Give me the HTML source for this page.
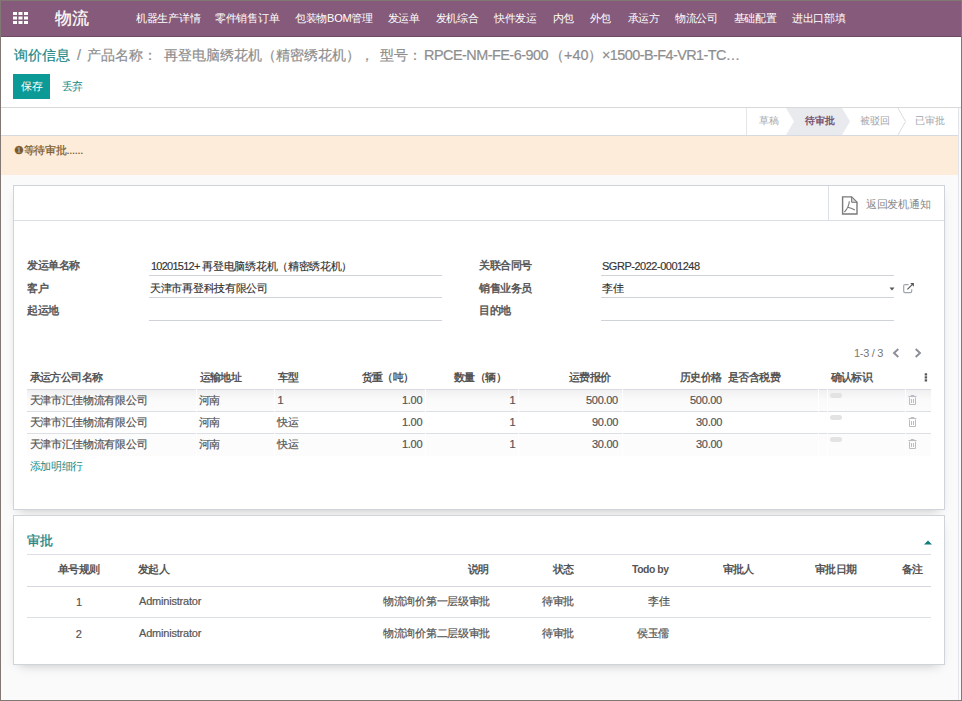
<!DOCTYPE html>
<html><head><meta charset="utf-8">
<style>
*{box-sizing:border-box;margin:0;padding:0}
html,body{width:962px;height:701px;overflow:hidden;background:#827873}
body{font-family:"Liberation Sans",sans-serif;color:#4c4c4c;position:relative}
#app{position:absolute;left:1px;top:1px;width:960px;height:699px;background:#fafafa}
.b{position:absolute}
.a{position:absolute;white-space:nowrap;line-height:1;font-size:11px;letter-spacing:-0.3px}
.m{top:13px;color:#fff}
.lbl{color:#555;letter-spacing:-0.5px;-webkit-text-stroke:0.45px #555}
.val{color:#333;-webkit-text-stroke:0.15px #333}
.ul{position:absolute;height:1px;background:#cfd2d8}
.th{font-weight:bold;color:#555;letter-spacing:-0.6px}
.td{color:#555;-webkit-text-stroke:0.2px #555}
.bc{top:48px;font-size:14.4px;color:#8e8e8e;letter-spacing:0;-webkit-text-stroke:0.2px #8e8e8e}
.st{top:116px;color:#a3a6ac;font-size:10px;letter-spacing:0}
.card{position:absolute;background:#fff;border:1px solid #cfd3da;box-shadow:0 5px 11px -6px rgba(0,0,0,.28)}
.rl{position:absolute;height:1px;background:#dcdfe5}
.gap{position:absolute;width:1px;background:rgba(255,255,255,.85)}
.tr{position:absolute;width:9px;height:10px}
.pill{position:absolute;width:11.5px;height:5px;border-radius:3px;background:#e3e3e3}
</style></head><body>
<div id="app"></div>
<!-- NAV -->
<div class="b" style="left:1px;top:1px;width:960px;height:36px;background:#855a7a;border-bottom:1px solid #6e4a64"></div>
<svg class="b" style="left:13px;top:12px" width="16" height="12" viewBox="0 0 16 12">
 <g fill="#fff">
  <rect x="0" y="0" width="4" height="3"/><rect x="5.5" y="0" width="4" height="3"/><rect x="11" y="0" width="4" height="3"/>
  <rect x="0" y="4.5" width="4" height="3"/><rect x="5.5" y="4.5" width="4" height="3"/><rect x="11" y="4.5" width="4" height="3"/>
  <rect x="0" y="9" width="4" height="3"/><rect x="5.5" y="9" width="4" height="3"/><rect x="11" y="9" width="4" height="3"/>
 </g></svg>
<div class="a" id="brand" style="left:55px;top:10px;font-size:17.3px;color:#fff;letter-spacing:0;-webkit-text-stroke:0.25px #fff">物流</div>
<div class="a m" id="m1" style="left:136px">机器生产详情</div>
<div class="a m" id="m2" style="left:215px">零件销售订单</div>
<div class="a m" id="m3" style="left:295px">包装物BOM管理</div>
<div class="a m" id="m4" style="left:387.5px">发运单</div>
<div class="a m" id="m5" style="left:435.5px">发机综合</div>
<div class="a m" id="m6" style="left:494px">快件发运</div>
<div class="a m" id="m7" style="left:552.5px">内包</div>
<div class="a m" id="m8" style="left:589.5px">外包</div>
<div class="a m" id="m9" style="left:627.5px">承运方</div>
<div class="a m" id="m10" style="left:675px">物流公司</div>
<div class="a m" id="m11" style="left:733.5px">基础配置</div>
<div class="a m" id="m12" style="left:792px">进出口部填</div>

<!-- CONTROL PANEL -->
<div class="b" style="left:1px;top:37px;width:960px;height:71px;background:#fff;border-bottom:1px solid #d9d9d9"></div>
<div class="a bc" id="bc1" style="left:13.5px;color:#1c8886;-webkit-text-stroke:0.2px #1c8886">询价信息</div>
<div class="a bc" id="bc2" style="left:77px">/</div>
<div class="a bc" id="bc3" style="left:87px">产品名称：</div>
<div class="a bc" id="bc4" style="left:164px">再登电脑绣花机（精密绣花机），</div>
<div class="a bc" id="bc5" style="left:380px">型号：</div>
<div class="a bc" id="bc6" style="left:424px;letter-spacing:-0.5px">RPCE-NM-FE-6-900</div>
<div class="a bc" id="bc7" style="left:550px">（+40）</div>
<div class="a bc" id="bc8" style="left:602px;letter-spacing:-0.55px">×1500-B-F4-VR1-TC…</div>
<div class="b" style="left:13px;top:74px;width:37px;height:25px;background:#0b9a96"></div>
<div class="a" id="save" style="left:21px;top:81px;color:#fff">保存</div>
<div class="a" id="disc" style="left:61.5px;top:81px;color:#1a8a87">丢弃</div>

<!-- STATUSBAR -->
<div class="b" style="left:1px;top:108px;width:957px;height:28px;background:#fff;border-bottom:1px solid #d6d9e0"></div>
<div class="b" style="left:746px;top:108px;width:1px;height:27px;background:#e6e6e6"></div>
<div class="a st" id="st1" style="left:759px">草稿</div>
<svg class="b" style="left:786px;top:108px" width="66" height="27" viewBox="0 0 66 27"><polygon points="0,0 56,0 64,13.5 56,27 0,27 8,13.5" fill="#e9eaee"/></svg>
<div class="a st" id="st2" style="left:804.5px;color:#7a5572;font-weight:bold">待审批</div>
<div class="a st" id="st3" style="left:859.5px">被驳回</div>
<svg class="b" style="left:897px;top:108px" width="10" height="27" viewBox="0 0 10 27"><polyline points="1,0 8.5,13.5 1,27" fill="none" stroke="#dcdcdc" stroke-width="1"/></svg>
<div class="a st" id="st4" style="left:915px">已审批</div>

<!-- ALERT -->
<div class="b" style="left:1px;top:136px;width:957px;height:39px;background:#fcecd9"></div>
<div class="a" id="alert" style="left:14px;top:145px;color:#7a5a2c;-webkit-text-stroke:0.2px #7a5a2c">❶等待审批......</div>
<div class="b" style="left:958px;top:108px;width:1px;height:592px;background:#e2e4ea"></div>

<!-- CARD 1 -->
<div class="card" style="left:13px;top:185px;width:932px;height:325px"></div>
<div class="b" style="left:14px;top:220px;width:930px;height:1px;background:#dcdfe5"></div>
<div class="b" style="left:828px;top:186px;width:1px;height:34px;background:#dcdfe5"></div>
<svg class="b" style="left:841px;top:196px" width="17" height="19" viewBox="0 0 17 19">
 <path d="M1.6,0.9 H10.6 L16,6.3 V18 H1.6 Z" fill="none" stroke="#7a7a7a" stroke-width="1.4"/>
 <path d="M10.6,0.9 V6.3 H16 Z" fill="#d8d8d8" stroke="#7a7a7a" stroke-width="1"/>
 <path d="M8.3,5.2 C8.1,9 6.2,13 3.4,16.2 M6.6,11.2 C9,11.6 11.6,12.6 13.9,13.9" fill="none" stroke="#7a7a7a" stroke-width="1.1"/>
</svg>
<div class="a" id="ret" style="left:866px;top:199px;color:#888">返回发机通知</div>

<div class="a lbl" id="l1" style="left:27px;top:260px">发运单名称</div>
<div class="a lbl" id="l2" style="left:27px;top:282.5px">客户</div>
<div class="a lbl" id="l3" style="left:27px;top:304.5px">起运地</div>
<div class="a val" id="v1" style="left:151px;top:261px"><span style="letter-spacing:-0.75px">10201512+</span> 再登电脑绣花机（精密绣花机）</div>
<div class="a val" id="v2" style="left:150px;top:283px">天津市再登科技有限公司</div>
<div class="ul" style="left:149px;top:275px;width:293px"></div>
<div class="ul" style="left:149px;top:297px;width:293px"></div>
<div class="ul" style="left:149px;top:320px;width:293px"></div>

<div class="a lbl" id="r1" style="left:479px;top:260px">关联合同号</div>
<div class="a lbl" id="r2" style="left:479px;top:282.5px">销售业务员</div>
<div class="a lbl" id="r3" style="left:479px;top:304.5px">目的地</div>
<div class="a val" id="v3" style="left:602px;top:261px;letter-spacing:-0.48px">SGRP-2022-0001248</div>
<div class="a val" id="v4" style="left:602px;top:283px">李佳</div>
<div class="ul" style="left:601px;top:275px;width:293px"></div>
<div class="ul" style="left:601px;top:297px;width:293px"></div>
<div class="ul" style="left:601px;top:320px;width:293px"></div>
<svg class="b" style="left:889px;top:287px" width="6" height="4" viewBox="0 0 6 4"><polygon points="0.5,0.5 5.5,0.5 3,3.5" fill="#555"/></svg>
<svg class="b" style="left:903px;top:283px" width="12" height="11" viewBox="0 0 12 11">
 <path d="M5.6,1.6 H2 Q0.7,1.6 0.7,2.9 V8.3 Q0.7,9.6 2,9.6 H7.4 Q8.7,9.6 8.7,8.3 V6.2" fill="none" stroke="#9fa5ad" stroke-width="1.2"/>
 <path d="M4.4,6.3 L9.4,1.3" fill="none" stroke="#555" stroke-width="1.2"/>
 <polygon points="7.2,0 10.9,0 10.9,3.7" fill="#555"/>
</svg>

<!-- pager -->
<div class="a" id="pager" style="left:854px;top:347.5px;color:#777">1-3 / 3</div>
<svg class="b" style="left:892px;top:347.5px" width="8" height="10" viewBox="0 0 8 10"><polyline points="6.3,1 2,5 6.3,9" fill="none" stroke="#8a8f96" stroke-width="1.9"/></svg>
<svg class="b" style="left:914px;top:347.5px" width="8" height="10" viewBox="0 0 8 10"><polyline points="1.7,1 6,5 1.7,9" fill="none" stroke="#8a8f96" stroke-width="1.9"/></svg>

<!-- table -->
<div class="a th" id="h1" style="left:29.5px;top:372px">承运方公司名称</div>
<div class="a th" id="h2" style="left:199.5px;top:372px">运输地址</div>
<div class="a th" id="h3" style="left:278px;top:372px">车型</div>
<div class="a th" id="h4" style="left:361.5px;top:372px">货重（吨）</div>
<div class="a th" id="h5" style="left:454px;top:372px">数量（辆）</div>
<div class="a th" id="h6" style="left:569px;top:372px">运费报价</div>
<div class="a th" id="h7" style="left:680px;top:372px">历史价格</div>
<div class="a th" id="h8" style="left:728px;top:372px">是否含税费</div>
<div class="a th" id="h9" style="left:830.5px;top:372px">确认标识</div>
<svg class="b" style="left:924px;top:373px" width="4" height="9" viewBox="0 0 4 9"><rect x="0.7" y="0.3" width="2.4" height="2.2" fill="#555"/><rect x="0.7" y="3.3" width="2.4" height="2.2" fill="#555"/><rect x="0.7" y="6.3" width="2.4" height="2.2" fill="#555"/></svg>

<div class="b" style="left:27px;top:390px;width:904px;height:21px;background:linear-gradient(#f0f0f2,#fafafa 45%,#fcfcfc)"></div>
<div class="b" style="left:27px;top:434px;width:904px;height:22px;background:#fcfcfc"></div>
<div class="rl" style="left:27px;top:389px;width:904px;background:#d8dbe2"></div>
<div class="rl" style="left:27px;top:411px;width:904px"></div>
<div class="rl" style="left:27px;top:433px;width:904px"></div>
<div class="gap" style="left:196px;top:389px;height:67px"></div>
<div class="gap" style="left:274px;top:389px;height:67px"></div>
<div class="gap" style="left:425px;top:389px;height:67px"></div>
<div class="gap" style="left:518px;top:389px;height:67px"></div>
<div class="gap" style="left:622px;top:389px;height:67px"></div>
<div class="gap" style="left:818px;top:389px;height:67px"></div>
<div class="gap" style="left:827px;top:389px;height:67px"></div>
<div class="gap" style="left:905px;top:389px;height:67px"></div>

<div class="a td" id="c11" style="left:29.5px;top:395px">天津市汇佳物流有限公司</div>
<div class="a td" id="c12" style="left:29.5px;top:417px">天津市汇佳物流有限公司</div>
<div class="a td" id="c13" style="left:29.5px;top:439px">天津市汇佳物流有限公司</div>
<div class="a td" id="c21" style="left:198.5px;top:395px">河南</div>
<div class="a td" style="left:198.5px;top:417px">河南</div>
<div class="a td" style="left:198.5px;top:439px">河南</div>
<div class="a td" id="c31" style="left:277.5px;top:395px">1</div>
<div class="a td" id="c32" style="left:277px;top:417px">快运</div>
<div class="a td" style="left:277px;top:439px">快运</div>
<div class="a td" id="c41" style="left:402px;top:395px">1.00</div>
<div class="a td" id="c42" style="left:402px;top:417px">1.00</div>
<div class="a td" id="c43" style="left:402px;top:439px">1.00</div>
<div class="a td" id="c51" style="left:509.5px;top:395px">1</div>
<div class="a td" style="left:509.5px;top:417px">1</div>
<div class="a td" style="left:509.5px;top:439px">1</div>
<div class="a td" id="c61" style="left:586px;top:395px">500.00</div>
<div class="a td" id="c62" style="left:592px;top:417px">90.00</div>
<div class="a td" style="left:592px;top:439px">30.00</div>
<div class="a td" id="c71" style="left:690px;top:395px">500.00</div>
<div class="a td" style="left:696px;top:417px">30.00</div>
<div class="a td" style="left:696px;top:439px">30.00</div>
<div class="pill" style="left:830px;top:392.5px"></div>
<div class="pill" style="left:830px;top:414.5px"></div>
<div class="pill" style="left:830px;top:436.5px"></div>
<svg class="tr" style="left:908px;top:395px" viewBox="0 0 9 10"><path d="M0.5,1.5 H8.5 M3,1.5 V0.5 H6 V1.5 M1.5,2.5 V9.5 H7.5 V2.5 M3.5,4 V8 M5.5,4 V8" fill="none" stroke="#b9bdc4" stroke-width="1"/></svg>
<svg class="tr" style="left:908px;top:417px" viewBox="0 0 9 10"><path d="M0.5,1.5 H8.5 M3,1.5 V0.5 H6 V1.5 M1.5,2.5 V9.5 H7.5 V2.5 M3.5,4 V8 M5.5,4 V8" fill="none" stroke="#b9bdc4" stroke-width="1"/></svg>
<svg class="tr" style="left:908px;top:439px" viewBox="0 0 9 10"><path d="M0.5,1.5 H8.5 M3,1.5 V0.5 H6 V1.5 M1.5,2.5 V9.5 H7.5 V2.5 M3.5,4 V8 M5.5,4 V8" fill="none" stroke="#b9bdc4" stroke-width="1"/></svg>
<div class="a" id="add" style="left:29.5px;top:461px;color:#1a8a87">添加明细行</div>

<!-- CARD 2 -->
<div class="card" style="left:13px;top:515px;width:932px;height:150px"></div>
<div class="a" id="apt" style="left:27px;top:534px;font-size:13.2px;color:#1b8381;letter-spacing:0;-webkit-text-stroke:0.3px #1b8381">审批</div>
<svg class="b" style="left:924px;top:540px" width="8" height="5" viewBox="0 0 8 5"><polygon points="0,4.5 8,4.5 4,0.5" fill="#127c7a"/></svg>
<div class="rl" style="left:27px;top:554px;width:904px"></div>
<div class="a th" id="g1" style="left:58px;top:564px">单号规则</div>
<div class="a th" id="g2" style="left:138px;top:564px">发起人</div>
<div class="a th" id="g3" style="left:467.5px;top:564px">说明</div>
<div class="a th" id="g4" style="left:552.5px;top:564px">状态</div>
<div class="a th" id="g5" style="left:632px;top:565px;font-size:10.4px;letter-spacing:-0.45px">Todo by</div>
<div class="a th" id="g6" style="left:722.5px;top:564px">审批人</div>
<div class="a th" id="g7" style="left:815px;top:564px">审批日期</div>
<div class="a th" id="g8" style="left:902px;top:564px">备注</div>
<div class="rl" style="left:27px;top:586px;width:904px;background:#d6dae0"></div>
<div class="rl" style="left:27px;top:617px;width:904px"></div>
<div class="a td" id="n1" style="left:76px;top:597px">1</div>
<div class="a td" id="n2" style="left:75.8px;top:629px">2</div>
<div class="a td" id="ad1" style="left:139px;top:596px;letter-spacing:-0.2px">Administrator</div>
<div class="a td" id="ad2" style="left:139px;top:628px;letter-spacing:-0.2px">Administrator</div>
<div class="a td" id="ds1" style="left:383px;top:596px">物流询价第一层级审批</div>
<div class="a td" id="ds2" style="left:383px;top:628px">物流询价第二层级审批</div>
<div class="a td" id="ss1" style="left:542px;top:596px">待审批</div>
<div class="a td" id="ss2" style="left:542px;top:628px">待审批</div>
<div class="a td" id="td1" style="left:648px;top:596px">李佳</div>
<div class="a td" id="td2" style="left:637px;top:628px">侯玉儒</div>
</body></html>
